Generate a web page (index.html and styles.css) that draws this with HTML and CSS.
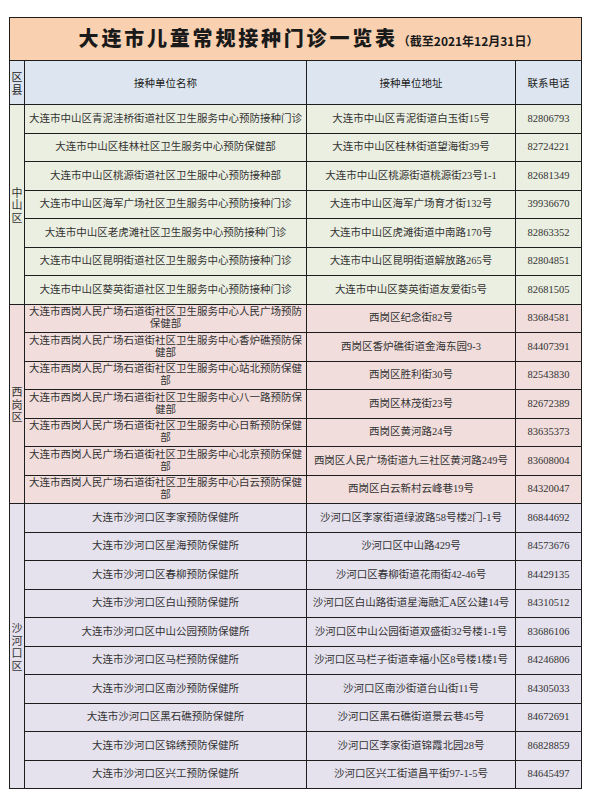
FILE: index.html
```html
<!DOCTYPE html>
<html lang="zh-CN">
<head>
<meta charset="utf-8">
<title>大连市儿童常规接种门诊一览表</title>
<link rel="stylesheet" href="styles.css">
</head>
<body>
<table class="sheet">
  <colgroup>
    <col class="c-dist">
    <col class="c-name">
    <col class="c-addr">
    <col class="c-tel">
  </colgroup>
  <thead>
    <tr class="title-row">
      <th colspan="4" class="title"><span class="title-main">大连市儿童常规接种门诊一览表</span><span class="title-sub">（截至2021年12月31日）</span></th>
    </tr>
    <tr class="head-row">
      <th class="dist-head">区县</th>
      <th>接种单位名称</th>
      <th>接种单位地址</th>
      <th>联系电话</th>
    </tr>
  </thead>
  <tbody class="zs">
    <tr><td class="dist" rowspan="7">中山区</td><td>大连市中山区青泥洼桥街道社区卫生服务中心预防接种门诊</td><td>大连市中山区青泥街道白玉街15号</td><td class="tel">82806793</td></tr>
    <tr><td>大连市中山区桂林社区卫生服务中心预防保健部</td><td>大连市中山区桂林街道望海街39号</td><td class="tel">82724221</td></tr>
    <tr><td>大连市中山区桃源街道社区卫生服中心预防接种部</td><td>大连市中山区桃源街道桃源街23号1-1</td><td class="tel">82681349</td></tr>
    <tr><td>大连市中山区海军广场社区卫生服务中心预防接种门诊</td><td>大连市中山区海军广场育才街132号</td><td class="tel">39936670</td></tr>
    <tr><td>大连市中山区老虎滩社区卫生服务中心预防接种门诊</td><td>大连市中山区虎滩街道中南路170号</td><td class="tel">82863352</td></tr>
    <tr><td>大连市中山区昆明街道社区卫生服务中心预防接种门诊</td><td>大连市中山区昆明街道解放路265号</td><td class="tel">82804851</td></tr>
    <tr><td>大连市中山区葵英街道社区卫生服务中心预防接种门诊</td><td>大连市中山区葵英街道友爱街5号</td><td class="tel">82681505</td></tr>
  </tbody>
  <tbody class="xg">
    <tr><td class="dist" rowspan="7">西岗区</td><td>大连市西岗人民广场石道街社区卫生服务中心人民广场预防保健部</td><td>西岗区纪念街82号</td><td class="tel">83684581</td></tr>
    <tr><td>大连市西岗人民广场石道街社区卫生服务中心香炉礁预防保健部</td><td>西岗区香炉礁街道金海东园9-3</td><td class="tel">84407391</td></tr>
    <tr><td>大连市西岗人民广场石道街社区卫生服务中心站北预防保健部</td><td>西岗区胜利街30号</td><td class="tel">82543830</td></tr>
    <tr><td>大连市西岗人民广场石道街社区卫生服务中心八一路预防保健部</td><td>西岗区林茂街23号</td><td class="tel">82672389</td></tr>
    <tr><td>大连市西岗人民广场石道街社区卫生服务中心日新预防保健部</td><td>西岗区黄河路24号</td><td class="tel">83635373</td></tr>
    <tr><td>大连市西岗人民广场石道街社区卫生服务中心北京预防保健部</td><td>西岗区人民广场街道九三社区黄河路249号</td><td class="tel">83608004</td></tr>
    <tr><td>大连市西岗人民广场石道街社区卫生服务中心白云预防保健部</td><td>西岗区白云新村云峰巷19号</td><td class="tel">84320047</td></tr>
  </tbody>
  <tbody class="shk">
    <tr><td class="dist" rowspan="10">沙河口区</td><td>大连市沙河口区李家预防保健所</td><td>沙河口区李家街道绿波路58号楼2门-1号</td><td class="tel">86844692</td></tr>
    <tr><td>大连市沙河口区星海预防保健所</td><td>沙河口区中山路429号</td><td class="tel">84573676</td></tr>
    <tr><td>大连市沙河口区春柳预防保健所</td><td>沙河口区春柳街道花雨街42-46号</td><td class="tel">84429135</td></tr>
    <tr><td>大连市沙河口区白山预防保健所</td><td>沙河口区白山路街道星海融汇A区公建14号</td><td class="tel">84310512</td></tr>
    <tr><td>大连市沙河口区中山公园预防保健所</td><td>沙河口区中山公园街道双盛街32号楼1-1号</td><td class="tel">83686106</td></tr>
    <tr><td>大连市沙河口区马栏预防保健所</td><td>沙河口区马栏子街道幸福小区8号楼1楼1号</td><td class="tel">84246806</td></tr>
    <tr><td>大连市沙河口区南沙预防保健所</td><td>沙河口区南沙街道台山街11号</td><td class="tel">84305033</td></tr>
    <tr><td>大连市沙河口区黑石礁预防保健所</td><td>沙河口区黑石礁街道景云巷45号</td><td class="tel">84672691</td></tr>
    <tr><td>大连市沙河口区锦绣预防保健所</td><td>沙河口区李家街道锦霞北园28号</td><td class="tel">86828859</td></tr>
    <tr><td>大连市沙河口区兴工预防保健所</td><td>沙河口区兴工街道昌平街97-1-5号</td><td class="tel">84645497</td></tr>
  </tbody>
</table>
</body>
</html>
```

FILE: styles.css
```css
html, body {
  margin: 0;
  padding: 0;
  background: #ffffff;
}

body {
  padding: 17px 0 0 9px;
  font-family: "Liberation Serif", "Noto Sans CJK SC", serif;
  color: #333333;
}

.sheet {
  border-collapse: collapse;
  table-layout: fixed;
  width: 572px;
}

.c-dist { width: 15px; }
.c-name { width: 282px; }
.c-addr { width: 209px; }
.c-tel { width: 66px; }

.sheet th,
.sheet td {
  border: 1px solid #1e1e1e;
  padding: 0 2px;
  text-align: center;
  vertical-align: middle;
  font-size: 10.5px;
  line-height: 12px;
  font-weight: 400;
  overflow: hidden;
}

.title-row { height: 43px; }

.sheet .title {
  background: #f9d1b1;
  padding: 0 2px 0 28px;
  white-space: nowrap;
  color: #1a1a1a;
}

.title-main {
  font-family: "Noto Sans CJK SC", sans-serif;
  font-weight: 900;
  font-size: 20px;
  letter-spacing: 2.8px;
  line-height: 24px;
}

.title-sub {
  font-family: "Noto Sans CJK SC", sans-serif;
  font-weight: 700;
  font-size: 12px;
  line-height: 24px;
}

.head-row { height: 44px; }

.head-row th {
  background: #dde6f0;
  font-family: "Noto Sans CJK SC", sans-serif;
  color: #222222;
}

.sheet .dist-head,
.sheet .dist {
  padding: 0;
  font-size: 11px;
  line-height: 12.5px;
  word-break: break-all;
}

.dist {
  font-family: "Noto Sans CJK SC", sans-serif;
}

tbody tr { height: 28.5px; }

.zs td { background: #ebefe1; }
.xg td { background: #f1dddc; }
.shk td { background: #e5e1ed; }

.sheet .tel {
  font-size: 10.5px;
  padding: 0;
}
```
